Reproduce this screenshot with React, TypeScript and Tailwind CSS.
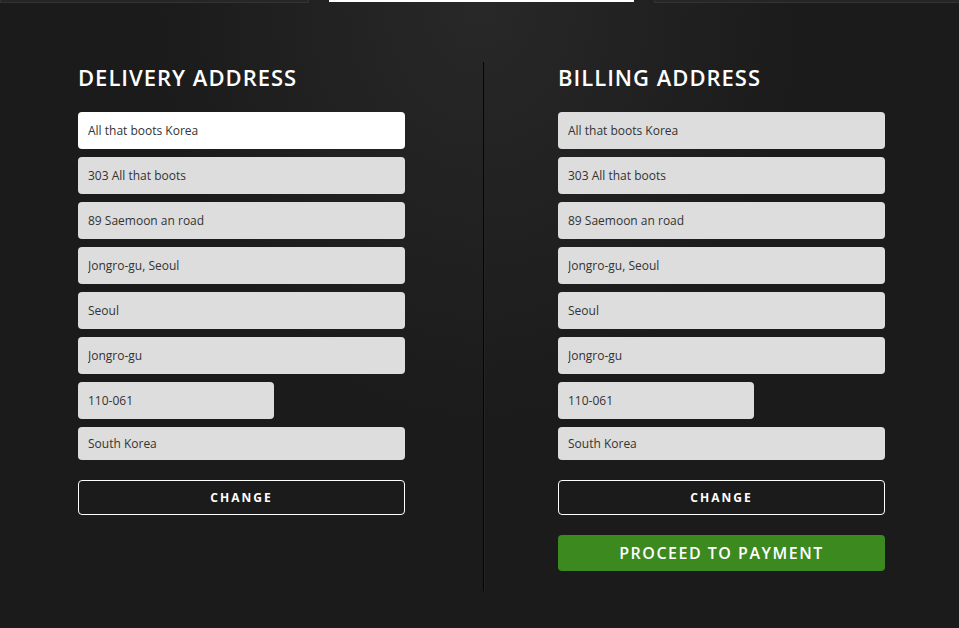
import React from "react";

const delivery = [
  "All that boots Korea",
  "303 All that boots",
  "89 Saemoon an road",
  "Jongro-gu, Seoul",
  "Seoul",
  "Jongro-gu",
];

function Field({ value, active = false, short = false, last = false }: { value: string; active?: boolean; short?: boolean; last?: boolean }) {
  return (
    <input
      readOnly
      value={value}
      className={`${last ? "h-[33px]" : "h-[37px]"} ${short ? "w-[196px]" : "w-full"} rounded-[4px] px-[10px] text-[12px] text-[#333] outline-none ${
        active ? "bg-white" : "bg-[#dddddd]"
      }`}
    />
  );
}

function AddressColumn({ title, firstActive, children }: { title: string; firstActive?: boolean; children?: React.ReactNode }) {
  return (
    <div className="flex w-[327px] flex-col">
      <h2 className="mb-[20px] text-[22px] font-semibold leading-[30px] tracking-[1px] text-white">{title}</h2>
      <div className="flex flex-col gap-[8px]">
        {delivery.map((line, i) => (
          <Field key={line} value={line} active={firstActive && i === 0} />
        ))}
        <Field value="110-061" short />
        <Field value="South Korea" last />
      </div>
      <button className="mt-[20px] h-[35px] w-full rounded-[4px] border border-white text-[12px] font-bold tracking-[2px] text-white">
        CHANGE
      </button>
      {children}
    </div>
  );
}

export default function App() {
  return (
    <div
      className="relative h-[628px] w-[959px] overflow-hidden bg-[#1b1b1b] bg-[radial-gradient(ellipse_320px_420px_at_50%_0%,#282828,#1b1b1b)]"
      style={{ fontFamily: '"Open Sans", "Noto Sans", sans-serif' }}
    >
      {/* tab strip */}
      <div className="flex h-[3px] items-start">
        <div className="h-[3px] w-[309px] border border-t-0 border-[#333] bg-[#262626]" />
        <div className="ml-[20px] h-[2px] w-[305px] bg-white" />
        <div className="ml-[20px] h-[3px] flex-1 border border-t-0 border-r-0 border-[#333] bg-[#262626]" />
      </div>

      <div className="flex pl-[78px] pt-[59px]">
        <AddressColumn title="DELIVERY ADDRESS" firstActive />
        <div className="ml-[78px] mr-[73px] h-[529px] w-[2px] border-r border-[#242424] bg-[#050505]" />
        <AddressColumn title="BILLING ADDRESS">
          <button className="mt-[20px] h-[36px] w-full rounded-[4px] bg-[#3c8a1f] text-[16px] font-semibold tracking-[1.5px] text-white">
            PROCEED TO PAYMENT
          </button>
        </AddressColumn>
      </div>
    </div>
  );
}
